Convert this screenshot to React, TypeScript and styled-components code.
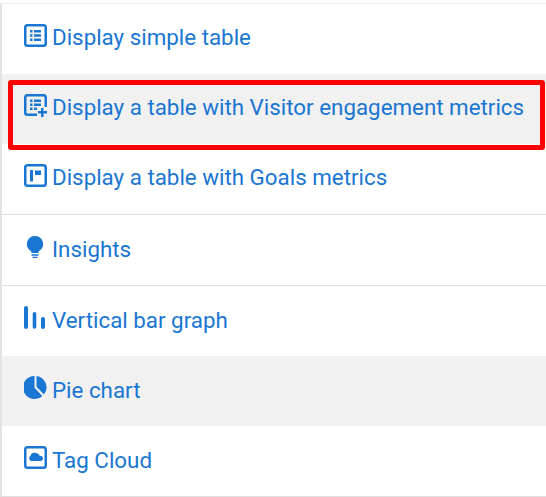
import styled, { createGlobalStyle } from 'styled-components';
import type { ReactNode } from 'react';

const GlobalStyle = createGlobalStyle`
  html, body {
    margin: 0;
    padding: 0;
    background: #fff;
  }
`;

const Page = styled.div`
  position: relative;
  width: 546px;
  height: 497px;
  padding-top: 3px;
  box-sizing: border-box;
  overflow: hidden;
  font-family: Roboto, 'Liberation Sans', sans-serif;
`;

const List = styled.ul`
  list-style: none;
  margin: 0;
  padding: 0;
  border-left: 2px solid #e2e2e2;
  border-top: 1px solid #ececec;
  border-bottom: 1px solid #e0e0e0;
`;

const Row = styled.li<{ $active?: boolean; $divided?: boolean }>`
  height: 70px;
  display: flex;
  align-items: flex-start;
  gap: 5px;
  padding: 20px 0 0 22px;
  box-sizing: border-box;
  color: #1976d2;
  font-size: 22.35px;
  line-height: 26px;
  background: ${(p) => (p.$active ? '#f1f1f1' : '#fff')};
  box-shadow: ${(p) => (p.$divided ? '0 1px 0 #dedede' : 'none')};
  margin-bottom: ${(p) => (p.$divided ? '1px' : '0')};
`;

const Label = styled.span<{ $raised?: boolean }>`
  padding-top: ${(p) => (p.$raised ? '0' : '1px')};
`;

const IconSlot = styled.svg`
  flex: none;
  width: 23px;
  height: 23px;
  fill: #1976d2;
`;

const Highlight = styled.div`
  position: absolute;
  left: 8px;
  top: 80px;
  width: 537px;
  height: 70px;
  box-sizing: border-box;
  border: 5px solid #fe0000;
  border-radius: 3px;
`;

const Icon = ({ children }: { children: ReactNode }) => (
  <IconSlot viewBox="0 0 23 23">{children}</IconSlot>
);

const Frame = () => (
  <path
    fillRule="evenodd"
    d="M3.5 0h16A3.500 3.500 0 0 1 23 3.500v16a3.500 3.500 0 0 1-3.500 3.500h-16A3.500 3.500 0 0 1 0 19.500v-16A3.500 3.500 0 0 1 3.500 0zm0 2.500a1 1 0 0 0-1 1v16a1 1 0 0 0 1 1h16a1 1 0 0 0 1-1v-16a1 1 0 0 0-1-1z"
  />
);

const items: { label: string; active?: boolean; divided?: boolean; raised?: boolean; icon: ReactNode }[] = [
  {
    label: 'Display simple table',
    raised: true,
    icon: (
      <>
        <Frame />
        <path d="M6 6h2.500v2.500H6zM10 6h7v2.500h-7zM6 10.200h2.500v2.500H6zM10 10.200h7v2.500h-7zM6 14.500h2.500V17H6zM10 14.500h7V17h-7z" />
      </>
    ),
  },
  {
    label: 'Display a table with Visitor engagement metrics',
    active: true,
    raised: true,
    icon: (
      <>
        <path d="M3.500 0h16A3.500 3.500 0 0 1 23 3.500V13h-2.500V3.500a1 1 0 0 0-1-1h-16a1 1 0 0 0-1 1v15a1 1 0 0 0 1 1H13V22H3.500A3.500 3.500 0 0 1 0 18.500v-15A3.500 3.500 0 0 1 3.500 0z" />
        <path d="M6 5.500h2.500V8H6zM10 5.500h7V8h-7zM6 9.500h2.500V12H6zM10 9.500h7V12h-7zM6 13.500h2.500V16H6zM10 13.500h3V16h-3z" />
        <path d="M17 14h2.500v3H23v2.500h-3.500V23H17v-3.500h-3V17h3z" />
      </>
    ),
  },
  {
    label: 'Display a table with Goals metrics',
    divided: true,
    raised: true,
    icon: (
      <>
        <Frame />
        <path d="M6 6h3v11.500H6zM11 6.500h6v4.500h-6z" />
      </>
    ),
  },
  {
    label: 'Insights',
    divided: true,
    icon: (
      <path d="M11 1a8 8 0 0 1 4.700 14.500c-.8.600-1.200 1.300-1.200 2.500h-7c0-1.200-.4-1.900-1.200-2.500A8 8 0 0 1 11 1zM7.500 19.300h7v1.400h-7zM8.500 21.700h5V23h-5z" />
    ),
  },
  {
    label: 'Vertical bar graph',
    icon: (
      <path d="M2 0a2 2 0 0 1 2 2v19a2 2 0 0 1-4 0V2a2 2 0 0 1 2-2zM10.500 6a1.800 1.800 0 0 1 1.800 1.800V21a1.800 1.800 0 0 1-3.600 0V7.800A1.800 1.800 0 0 1 10.500 6zM19 11a2 2 0 0 1 2 2v8a2 2 0 0 1-4 0v-8a2 2 0 0 1 2-2z" />
    ),
  },
  {
    label: 'Pie chart',
    active: true,
    icon: (
      <path d="M10.500 0v11.700l7.800 8.200A11.500 11.500 0 1 1 10.500 0zM12.500 0A11.500 11.500 0 0 1 20 18.500L12.500 10.800z" />
    ),
  },
  {
    label: 'Tag Cloud',
    icon: (
      <>
        <Frame />
        <path d="M12 7a4 4 0 0 1 3.600 2.800A2.800 2.800 0 0 1 19 12.500c0 1.500-1.200 2.500-2.500 2.500h-9.500A3 3 0 0 1 6.500 9.700 4 4 0 0 1 12 7z" />
      </>
    ),
  },
];

export default function App() {
  return (
    <Page>
      <GlobalStyle />
      <List>
        {items.map((item) => (
          <Row key={item.label} $active={item.active} $divided={item.divided}>
            <Icon>{item.icon}</Icon>
            <Label $raised={item.raised}>{item.label}</Label>
          </Row>
        ))}
      </List>
      <Highlight />
    </Page>
  );
}
